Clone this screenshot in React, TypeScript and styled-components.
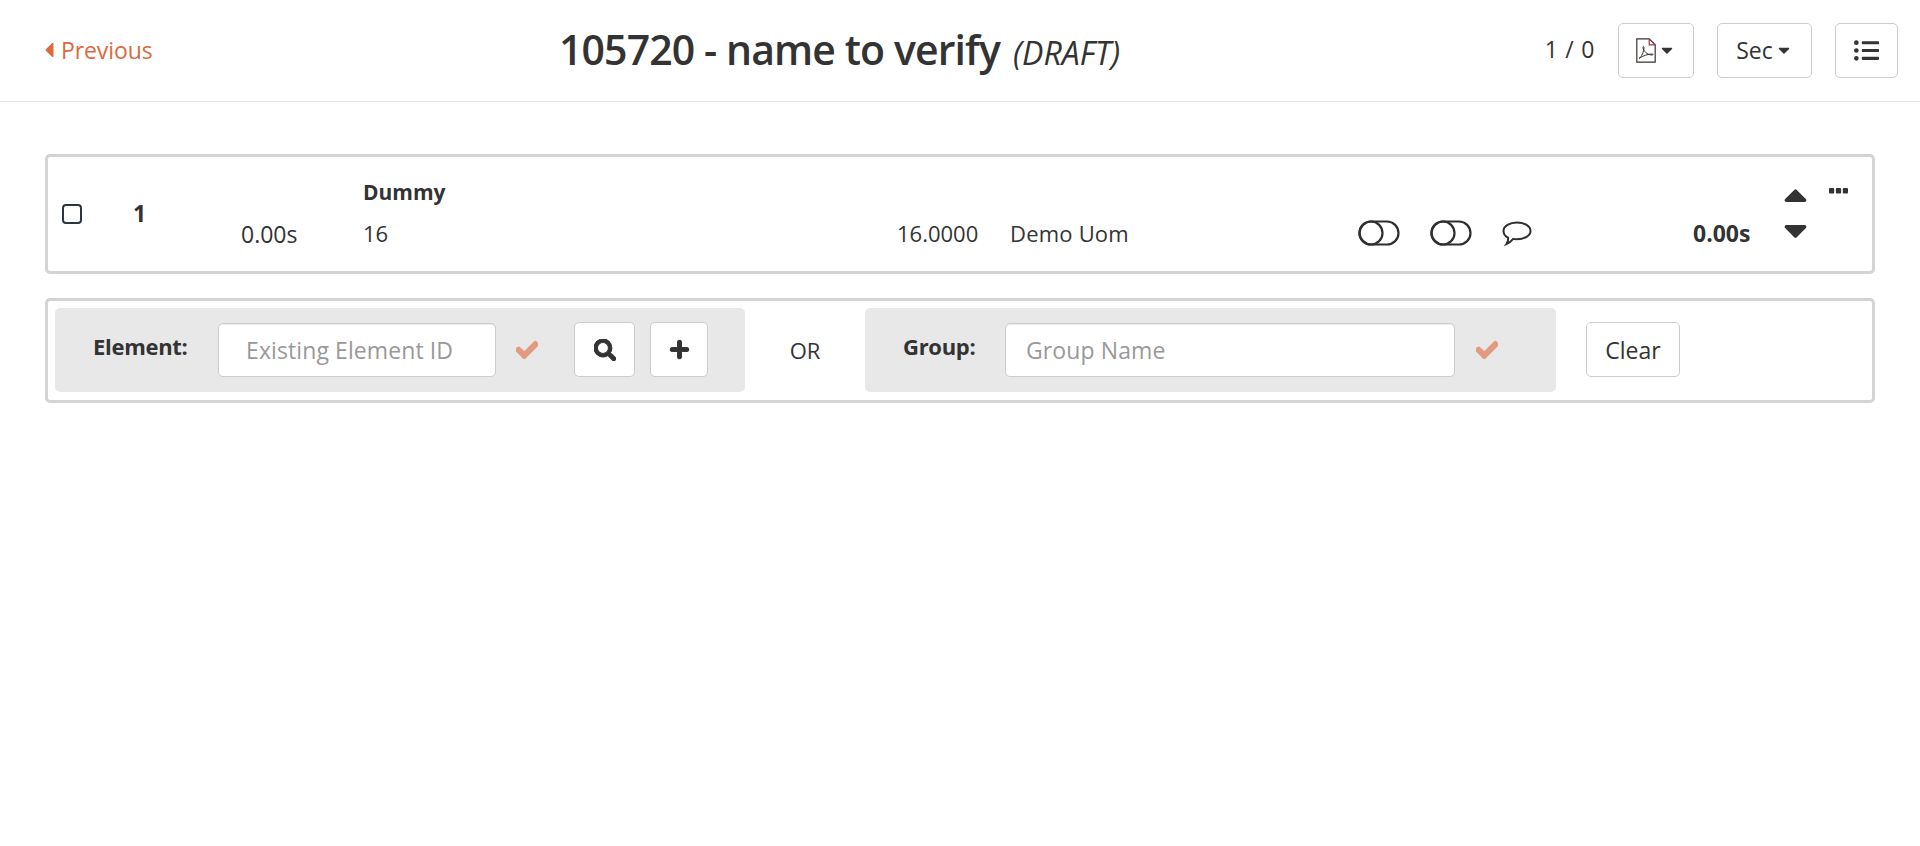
import React from 'react';
import styled, { createGlobalStyle } from 'styled-components';
import {
  FaCaretDown,
  FaCaretLeft,
  FaCheck,
  FaListUl,
  FaPlus,
  FaSearch,
  FaSortDown,
  FaSortUp,
} from 'react-icons/fa';

const GlobalStyle = createGlobalStyle`
  html, body {
    margin: 0;
    background: #fff;
    color: #333;
    font-family: "Open Sans", "Noto Sans", sans-serif;
    font-size: 20px;
  }
  * { box-sizing: border-box; }
`;

const Header = styled.header`
  display: flex;
  align-items: center;
  height: 102px;
  padding: 0 22px 1px 37px;
  border-bottom: 1px solid #e7e7e7;
`;

const BackLink = styled.a`
  display: flex;
  align-items: center;
  gap: 0;
  width: 522px;
  color: #e0683f;
  font-size: 23px;
  letter-spacing: -0.1px;
`;

const Title = styled.h1`
  flex: 1;
  margin: -2px 0 0;
  font-size: 41px;
  font-weight: 600;
  letter-spacing: -0.9px;
  white-space: nowrap;

  em {
    margin-left: 13px;
    font-size: 32px;
    font-weight: 400;
    letter-spacing: 0;
  }
`;

const Counter = styled.span`
  margin: 0 23px 2px 0;
  font-size: 23px;
  letter-spacing: 0.7px;
`;

const Button = styled.button<{ $w: number; $h?: number }>`
  display: inline-flex;
  align-items: center;
  justify-content: center;
  gap: 2px;
  flex: none;
  width: ${p => p.$w}px;
  height: ${p => p.$h ?? 55}px;
  padding: 0;
  background: #fff;
  border: 1px solid #ccc;
  border-radius: 5px;
  color: #333;
  font: inherit;
  font-size: 23px;
`;

const ToolButton = styled(Button)`
  margin-left: 23px;
`;

const Main = styled.main`
  display: flex;
  flex-direction: column;
  gap: 24px;
  padding: 52px 45px 0;
`;

const Card = styled.section`
  border: 3px solid #d4d4d4;
  border-radius: 5px;
`;

const Line = styled(Card)`
  display: flex;
  height: 120px;
  padding: 0 23px 0 14px;
`;

const CheckCell = styled.div`
  display: flex;
  align-items: center;
  width: 71px;
`;

const CheckBox = styled.span`
  display: block;
  width: 20px;
  height: 20px;
  border: 2px solid #2d3340;
  border-radius: 4px;
`;

const IndexCell = styled.div`
  display: flex;
  align-items: center;
  width: 108px;
  padding-bottom: 2px;
  font-size: 23px;
  font-weight: 700;
`;

const TimeCell = styled.div`
  align-self: flex-end;
  width: 122px;
  padding-bottom: 23px;
  font-size: 23px;
  line-height: 28px;
`;

const Details = styled.div`
  display: flex;
  flex-direction: column;
  flex: 1;
  min-width: 0;
`;

const Name = styled.div`
  margin-top: 21px;
  font-size: 21px;
  font-weight: 700;
  line-height: 28px;
`;

const Values = styled.div`
  display: flex;
  align-items: center;
  margin-top: 13px;
  font-size: 22px;
  line-height: 28px;
`;

const Code = styled.span`
  width: 534px;
`;

const Qty = styled.span`
  width: 113px;
`;

const Uom = styled.span`
  width: 348px;
  letter-spacing: 0.2px;
`;

const IconSlot = styled.span`
  display: flex;
  width: 72px;
`;

const CommentSlot = styled.span`
  display: flex;
  padding-top: 2px;
`;

const TotalTime = styled.span`
  margin-left: 161px;
  font-size: 23px;
  font-weight: 700;
  white-space: nowrap;
`;

const Movers = styled.div`
  display: flex;
  flex-direction: column;
  align-items: center;
  width: 46px;
  margin-right: 9px;
  padding-top: 28px;
  font-size: 39px;
  line-height: 0;

  svg:last-child { margin-top: -21px; }
`;

const More = styled.div`
  display: flex;
  justify-content: center;
  width: 22px;
  padding-top: 31px;
  line-height: 0;
`;

const AddBar = styled(Card)`
  display: flex;
  align-items: center;
  height: 105px;
  padding: 0 7px 2px;
`;

const Panel = styled.div<{ $pad: number; $w: number }>`
  display: flex;
  align-items: center;
  flex: none;
  width: ${p => p.$w}px;
  height: 84px;
  padding-left: ${p => p.$pad}px;
  background: #e8e8e8;
  border-radius: 5px;
`;

const FieldLabel = styled.label<{ $w: number }>`
  width: ${p => p.$w}px;
  margin-bottom: 7px;
  font-size: 22px;
  font-weight: 700;
  letter-spacing: -0.3px;
`;

const TextInput = styled.input<{ $w: number; $indent: number }>`
  width: ${p => p.$w}px;
  height: 54px;
  padding: 0 0 0 ${p => p.$indent}px;
  background: #fff;
  border: 1px solid #ccc;
  border-radius: 5px;
  box-shadow: inset 0 1px 1px rgba(0, 0, 0, 0.075);
  font: inherit;
  font-size: 23px;
  letter-spacing: 0.1px;
  color: #333;

  &::placeholder { color: #999; opacity: 1; }
`;

const Valid = styled.span<{ $w: number; $after?: number }>`
  display: flex;
  justify-content: center;
  width: ${p => p.$w}px;
  margin-right: ${p => p.$after ?? 0}px;
  color: #e39a7e;
  font-size: 22px;

  svg {
    stroke: currentColor;
    stroke-width: 40px;
  }
`;

const PanelButton = styled(Button)`
  margin-right: 15px;

  svg {
    stroke: currentColor;
    stroke-width: 24px;
  }
`;

const OrLabel = styled.span`
  width: 120px;
  text-align: center;
  font-size: 22px;
`;

const ClearButton = styled(Button)`
  margin-left: 30px;
`;

function PdfIcon() {
  return (
    <svg width='20' height='25' viewBox='0 0 20 25' fill='none' stroke='#3d3232' strokeWidth='1.2'>
      <path d='M.8.8h12.400l6 6v17.400H.8z' />
      <path d='M13.200.8v6h6' stroke='#a33a3a' />
      <path d='M3 20.500c2.500-1.500 5-7 5-11 0-1.500-1-1.500-1 0 0 3 4 7.500 9 7.500 1.500 0 1.500-1 0-1-3.500 0-9 1.500-13 4.500z' strokeWidth='1' />
    </svg>
  );
}

function ToggleIcon() {
  return (
    <svg width='42' height='26' viewBox='0 0 42 26' fill='none' stroke='#2f2f2f' strokeWidth='2.2'>
      <rect x='1.5' y='1.500' width='39' height='23' rx='11.500' />
      <circle cx='13' cy='13' r='11.500' />
    </svg>
  );
}

function CommentIcon() {
  return (
    <svg width='30' height='26' viewBox='0 0 30 26' fill='none' stroke='#2f2f2f' strokeWidth='2'>
      <path d='M15 1.500c7.400 0 13.500 3.700 13.500 8.400s-6.100 8.400-13.500 8.400c-1.300 0-2.600-.1-3.800-.4-1.600 2-3.900 3.900-6.700 5.100 1.200-1.700 1.800-3.700 1.600-6.300C3.300 15.300 1.500 12.800 1.500 9.900 1.500 5.200 7.600 1.500 15 1.500z' />
    </svg>
  );
}

function DotsIcon() {
  return (
    <svg width='19' height='6' viewBox='0 0 19 6' fill='#333'>
      <rect x='0' y='0' width='5.200' height='5.500' rx='1' />
      <rect x='6.900' y='0' width='5.200' height='5.500' rx='1' />
      <rect x='13.800' y='0' width='5.200' height='5.500' rx='1' />
    </svg>
  );
}

export default function App() {
  return (
    <>
      <GlobalStyle />
      <Header>
        <BackLink>
          <FaCaretLeft size={24} />
          Previous
        </BackLink>
        <Title>
          105720 - name to verify<em>(DRAFT)</em>
        </Title>
        <Counter>1 / 0</Counter>
        <Button $w={76}>
          <PdfIcon />
          <FaCaretDown size={18} />
        </Button>
        <ToolButton $w={95}>
          Sec
          <FaCaretDown size={18} />
        </ToolButton>
        <ToolButton $w={63}>
          <FaListUl size={25} />
        </ToolButton>
      </Header>
      <Main>
        <Line>
          <CheckCell>
            <CheckBox />
          </CheckCell>
          <IndexCell>1</IndexCell>
          <TimeCell>0.00s</TimeCell>
          <Details>
            <Name>Dummy</Name>
            <Values>
              <Code>16</Code>
              <Qty>16.0000</Qty>
              <Uom>Demo Uom</Uom>
              <IconSlot>
                <ToggleIcon />
              </IconSlot>
              <IconSlot>
                <ToggleIcon />
              </IconSlot>
              <CommentSlot>
                <CommentIcon />
              </CommentSlot>
              <TotalTime>0.00s</TotalTime>
            </Values>
          </Details>
          <Movers>
            <FaSortUp />
            <FaSortDown />
          </Movers>
          <More>
            <DotsIcon />
          </More>
        </Line>
        <AddBar>
          <Panel $pad={38} $w={690}>
            <FieldLabel $w={125}>Element:</FieldLabel>
            <TextInput $w={278} $indent={27} placeholder='Existing Element ID' />
            <Valid $w={62} $after={16}>
              <FaCheck />
            </Valid>
            <PanelButton $w={61}>
              <FaSearch size={22} />
            </PanelButton>
            <PanelButton $w={58}>
              <FaPlus size={21} />
            </PanelButton>
          </Panel>
          <OrLabel>OR</OrLabel>
          <Panel $pad={38} $w={691}>
            <FieldLabel $w={102}>Group:</FieldLabel>
            <TextInput $w={450} $indent={20} placeholder='Group Name' />
            <Valid $w={64}>
              <FaCheck />
            </Valid>
          </Panel>
          <ClearButton $w={94}>Clear</ClearButton>
        </AddBar>
      </Main>
    </>
  );
}
